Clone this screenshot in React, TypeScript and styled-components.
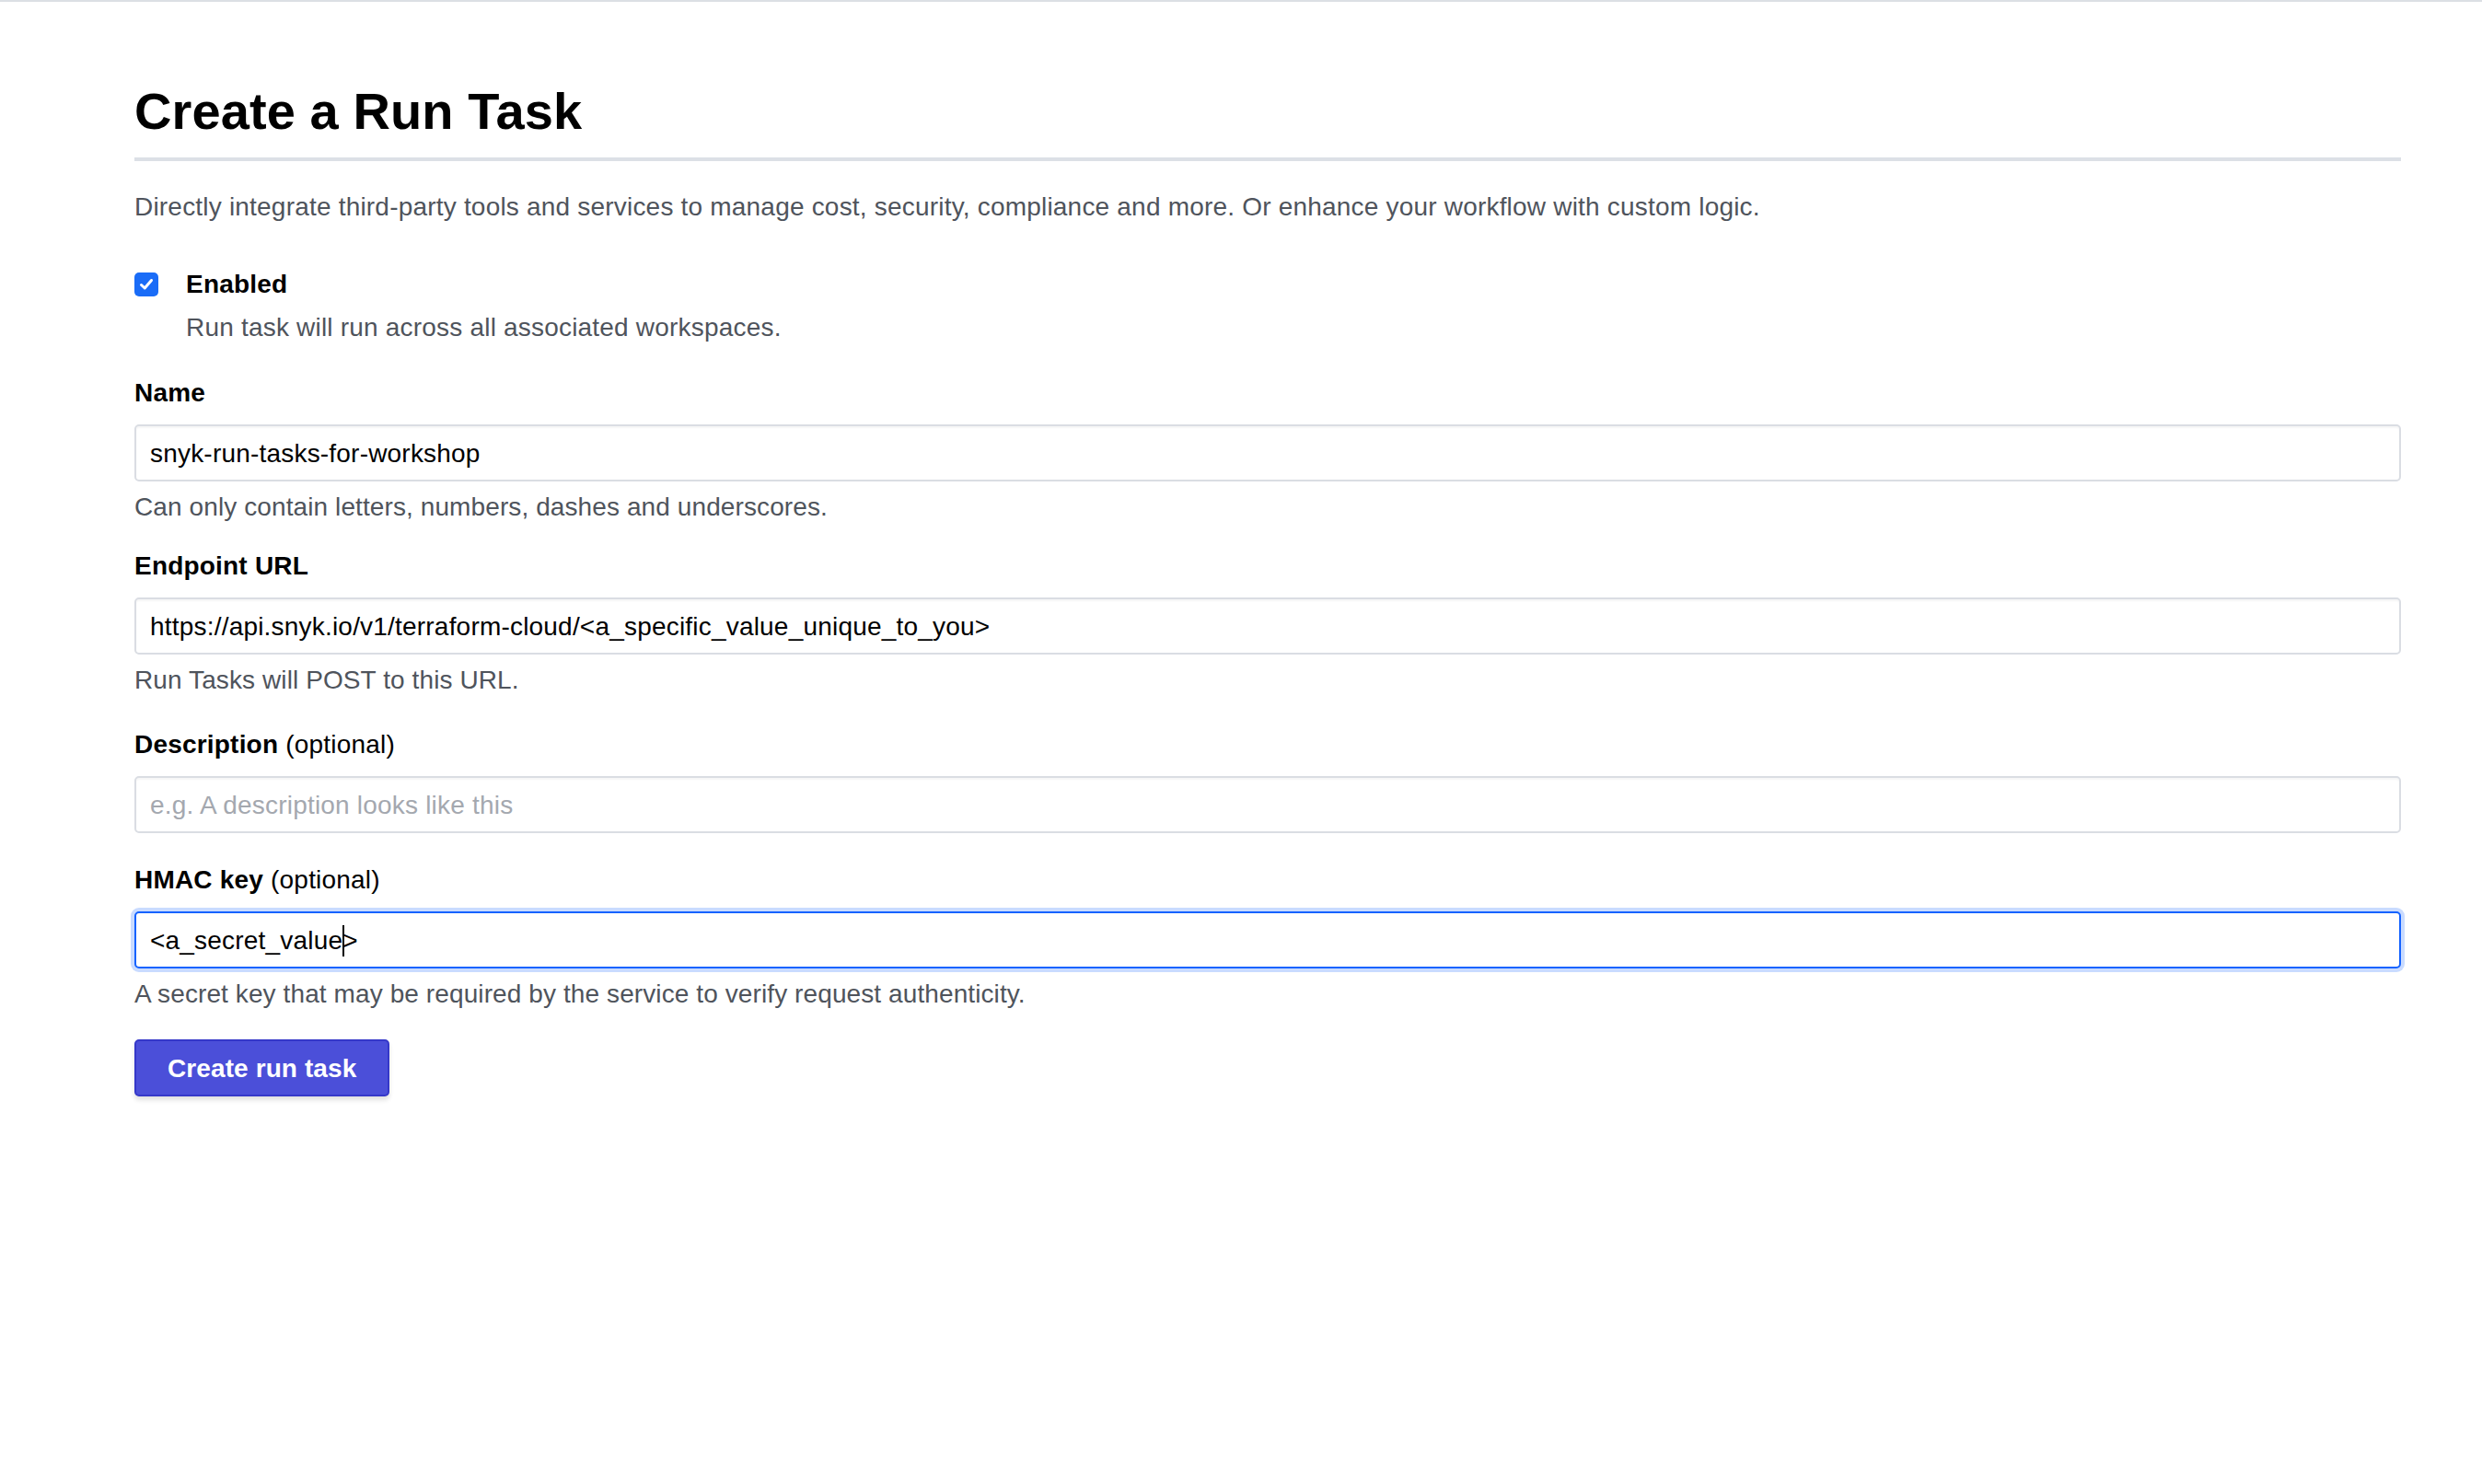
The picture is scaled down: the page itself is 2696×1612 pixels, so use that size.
import React, { useEffect, useState } from "react";
import styled, { createGlobalStyle, css } from "styled-components";

const FONT = `"Liberation Sans", Arial, Helvetica, sans-serif`;

const GlobalStyle = createGlobalStyle`
    html, body {
        margin: 0;
        padding: 0;
        background: #ffffff;
    }

    body {
        font-family: ${FONT};
        color: #000000;
        letter-spacing: 0.2px;
    }
`;

const TopRule = styled.div`
    height: 2px;
    background: #dcdfe4;
`;

const Page = styled.main`
    box-sizing: border-box;
    padding: 85px 88px 80px 146px;
`;

const Title = styled.h1`
    margin: 0;
    padding-bottom: 17px;
    border-bottom: 4px solid #dce0e6;
    font-size: 56px;
    line-height: 67px;
    font-weight: 700;
    letter-spacing: 0.1px;
    color: #000000;
`;

const Intro = styled.p`
    margin: 30px 0 0;
    font-size: 28px;
    line-height: 40px;
    color: #4f545c;
`;

const CheckRow = styled.label`
    margin-top: 44px;
    display: grid;
    grid-template-columns: 26px 1fr;
    column-gap: 30px;
    row-gap: 7px;
    align-items: center;
    cursor: pointer;
`;

const CheckBox = styled.span`
    width: 26px;
    height: 26px;
    border-radius: 5px;
    background: #1a6cf7;
    display: flex;
    align-items: center;
    justify-content: center;
`;

const CheckTitle = styled.span`
    font-size: 28px;
    line-height: 40px;
    font-weight: 700;
`;

const CheckHint = styled.span`
    grid-column: 2;
    font-size: 28px;
    line-height: 40px;
    color: #4f545c;
`;

const Field = styled.div<{ $gap: number }>`
    margin-top: ${(p) => p.$gap}px;
    display: flex;
    flex-direction: column;
`;

const Label = styled.label`
    padding-top: 2px;
    margin-bottom: 14px;
    font-size: 28px;
    line-height: 40px;
    font-weight: 700;
    color: #000000;
`;

const Optional = styled.span`
    font-weight: 400;
`;

const InputWrap = styled.div`
    position: relative;
`;

const Input = styled.input<{ $focused?: boolean }>`
    box-sizing: border-box;
    width: 100%;
    height: 62px;
    margin: 0;
    padding: 2px 15px 0;
    border: 2px solid #dadde3;
    border-radius: 5px;
    box-shadow: inset 0 2px 2px rgba(0, 0, 0, 0.04);
    font-family: ${FONT};
    font-size: 28px;
    letter-spacing: 0.2px;
    color: #000000;
    background: #ffffff;
    outline: none;

    &::placeholder {
        color: #a4a8af;
    }

    ${(p) =>
        p.$focused &&
        css`
            border-color: #1563ff;
            box-shadow: 0 0 0 4px #c9dbff;
        `}
`;

const Caret = styled.span`
    position: absolute;
    top: 15px;
    width: 2px;
    height: 34px;
    background: #000000;
    pointer-events: none;
`;

const Hint = styled.div`
    margin-top: 8px;
    font-size: 28px;
    line-height: 40px;
    letter-spacing: 0.1px;
    color: #4f545c;
`;

const SubmitButton = styled.button`
    margin-top: 29px;
    box-sizing: border-box;
    height: 62px;
    padding: 2px 34px 0;
    border: 2px solid #3538c9;
    border-radius: 5px;
    background: #4b4fd9;
    box-shadow: 0 4px 5px rgba(0, 0, 0, 0.12);
    color: #ffffff;
    font-family: ${FONT};
    font-size: 28px;
    font-weight: 700;
    letter-spacing: 0.1px;
    cursor: pointer;
`;

function CheckIcon() {
    return (
        <svg width="18" height="18" viewBox="0 0 18 18" fill="none">
            <path d="M3.5 9.5 L7.2 13 L14.5 4.5" stroke="#ffffff" strokeWidth="3" strokeLinecap="round" strokeLinejoin="round" />
        </svg>
    );
}

const HMAC_VALUE = "<a_secret_value>";

// caret sits after "<a_secret_value", just before the closing ">"
function useCaretOffset(text: string) {
    const [offset, setOffset] = useState(0);
    useEffect(() => {
        const ctx = document.createElement("canvas").getContext("2d");
        if (!ctx) return;
        ctx.font = `28px ${FONT}`;
        const w = ctx.measureText(text).width + text.length * 0.2;
        setOffset(17 + w);
    }, [text]);
    return offset;
}

export default function App() {
    const caretLeft = useCaretOffset(HMAC_VALUE.slice(0, -1));

    return (
        <>
            <GlobalStyle />
            <TopRule />
            <Page>
                <Title>Create a Run Task</Title>
                <Intro>
                    Directly integrate third-party tools and services to manage cost, security, compliance and more. Or
                    enhance your workflow with custom logic.
                </Intro>

                <CheckRow>
                    <CheckBox>
                        <CheckIcon />
                    </CheckBox>
                    <CheckTitle>Enabled</CheckTitle>
                    <CheckHint>Run task will run across all associated workspaces.</CheckHint>
                </CheckRow>

                <Field $gap={29}>
                    <Label htmlFor="name">Name</Label>
                    <Input id="name" defaultValue="snyk-run-tasks-for-workshop" />
                    <Hint>Can only contain letters, numbers, dashes and underscores.</Hint>
                </Field>

                <Field $gap={22}>
                    <Label htmlFor="url">Endpoint URL</Label>
                    <Input id="url" defaultValue="https://api.snyk.io/v1/terraform-cloud/<a_specific_value_unique_to_you>" />
                    <Hint>Run Tasks will POST to this URL.</Hint>
                </Field>

                <Field $gap={28}>
                    <Label htmlFor="description">
                        Description <Optional>(optional)</Optional>
                    </Label>
                    <Input id="description" placeholder="e.g. A description looks like this" />
                </Field>

                <Field $gap={29}>
                    <Label htmlFor="hmac">
                        HMAC key <Optional>(optional)</Optional>
                    </Label>
                    <InputWrap>
                        <Input id="hmac" $focused defaultValue={HMAC_VALUE} />
                        {caretLeft > 0 && <Caret style={{ left: caretLeft }} />}
                    </InputWrap>
                    <Hint>A secret key that may be required by the service to verify request authenticity.</Hint>
                </Field>

                <SubmitButton type="button">Create run task</SubmitButton>
            </Page>
        </>
    );
}
